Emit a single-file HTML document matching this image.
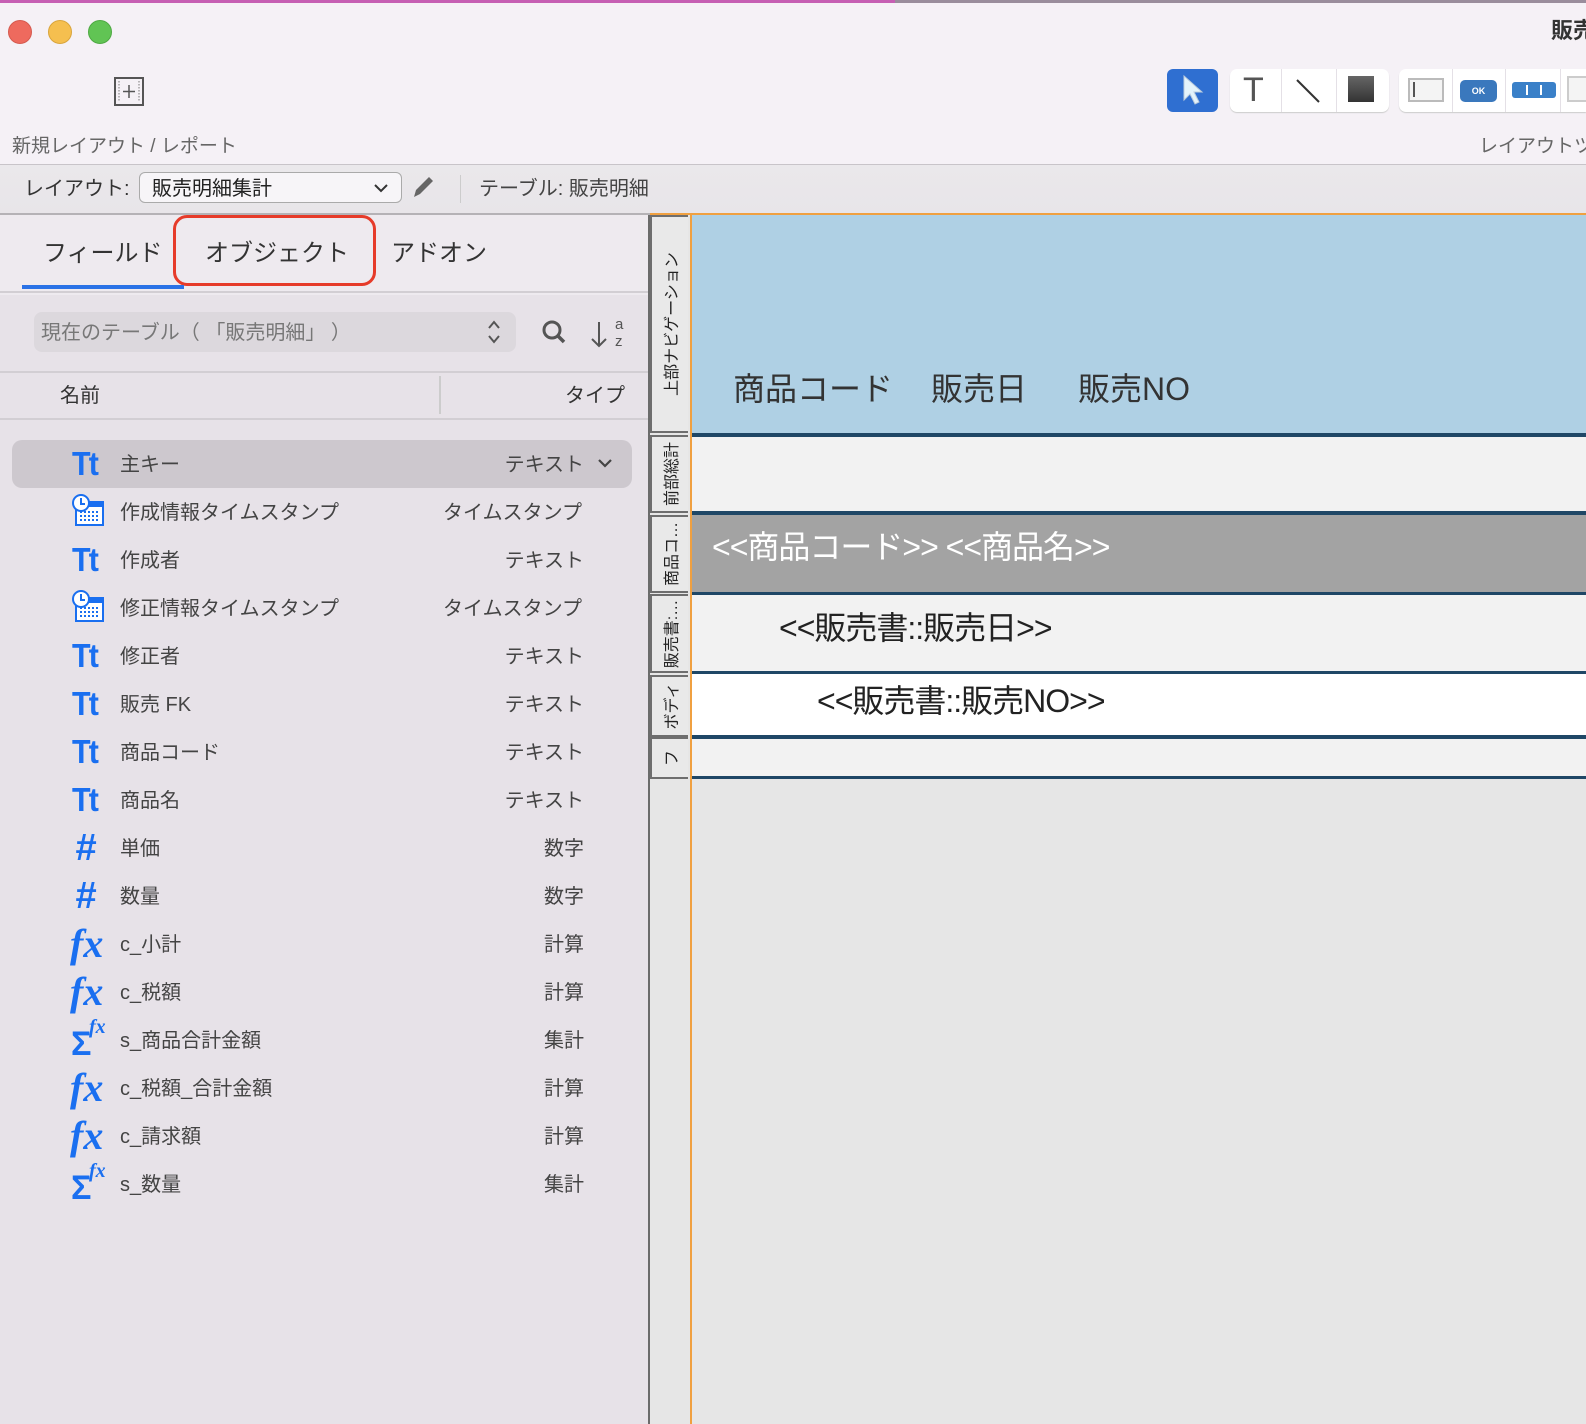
<!DOCTYPE html>
<html><head><meta charset="utf-8">
<style>
*{margin:0;padding:0;box-sizing:border-box}
body{width:1586px;height:1424px;overflow:hidden;position:relative;background:#e6e6e6;font-family:"Liberation Sans","Noto Sans CJK JP",sans-serif;color:#333}
.a{position:absolute}
.t{position:absolute;white-space:nowrap;line-height:1}
.row{position:absolute;left:12px;width:620px;height:48px}
.row .ic{position:absolute;left:60px;top:0;width:40px;height:48px;color:#1a6ff0}
.row .nm{position:absolute;left:108px;top:14px;font-size:20px;color:#444;line-height:22px}
.row .ty{position:absolute;right:48px;top:14px;font-size:20px;color:#444;line-height:22px}
.tt{font:bold 33px "Liberation Sans",sans-serif;position:absolute;top:5px;left:0;letter-spacing:-2px;transform:scaleX(.92);transform-origin:left}
.hs{font:bold italic 38px "Liberation Sans",sans-serif;position:absolute;top:3px;left:3px}
.fx{font:bold italic 40px "Liberation Serif",serif;position:absolute;top:0px;left:-2px;letter-spacing:0px}
.sg{position:absolute;left:-1px;top:9px;font:bold 34px "Liberation Sans",sans-serif}
.sgf{position:absolute;left:17px;top:0px;font:bold italic 20px "Liberation Serif",serif}
.vt{position:absolute;left:650px;width:38px;background:#e9e9e9;border:2px solid #6e6e6e;border-right:none;overflow:hidden}
.vt span{position:absolute;left:50%;top:50%;transform:translate(-50%,-50%) rotate(-90deg);font-size:16px;white-space:nowrap;color:#222}
.band{position:absolute;left:690px;right:0}
.ln{position:absolute;left:690px;right:0;background:#1f4766}
.big{font-size:32px;letter-spacing:-1px}
</style></head><body>
<div class="a" style="left:0;top:0;width:1586px;height:166px;background:#f5f1f6"></div>
<div class="a" style="left:0;top:0;width:895px;height:3px;background:#c65fb3"></div>
<div class="a" style="left:895px;top:0;width:691px;height:3px;background:#9a8d9c"></div>
<div class="a" style="left:8px;top:20px;width:24px;height:24px;border-radius:50%;background:#ee6a5e;border:1px solid #d55a4f"></div>
<div class="a" style="left:48px;top:20px;width:24px;height:24px;border-radius:50%;background:#f5bf4f;border:1px solid #d9a53c"></div>
<div class="a" style="left:88px;top:20px;width:24px;height:24px;border-radius:50%;background:#61c454;border:1px solid #4ea943"></div>
<svg class="a" style="left:114px;top:77px" width="30" height="29" viewBox="0 0 30 29"><rect x="1" y="1" width="28" height="27" fill="none" stroke="#555" stroke-width="2"/><line x1="5" y1="4" x2="5" y2="25" stroke="#777" stroke-dasharray="1.5 1.5"/><line x1="25" y1="4" x2="25" y2="25" stroke="#777" stroke-dasharray="1.5 1.5"/><line x1="15" y1="8" x2="15" y2="21" stroke="#555" stroke-width="1.5"/><line x1="9" y1="14.5" x2="21" y2="14.5" stroke="#555" stroke-width="1.5"/></svg>
<div class="t" style="left:12px;top:137px;font-size:19px;color:#666">新規レイアウト / レポート</div>
<div class="t" style="left:1551px;top:20px;font-size:22px;font-weight:bold;color:#333">販売</div>
<div class="t" style="left:1479px;top:137px;font-size:19px;color:#666">レイアウトツ</div>
<div class="a" style="left:1167px;top:69px;width:51px;height:43px;background:#2f6fd1;border-radius:6px"></div>
<svg class="a" style="left:1180px;top:74px" width="26" height="32" viewBox="0 0 26 32"><path d="M4 2 L4 26 L10 20 L15 30 L19 28 L14 18 L22 18 Z" fill="#e4f3fb" stroke="#bcd" stroke-width="1"/></svg>
<div class="a" style="left:1230px;top:69px;width:159px;height:43px;background:#fff;border-radius:7px;box-shadow:0 1px 1px #ccc"></div>
<div class="a" style="left:1281px;top:69px;width:1px;height:43px;background:#e4e0e6"></div>
<div class="a" style="left:1336px;top:69px;width:1px;height:43px;background:#e4e0e6"></div>
<div class="t" style="left:1243px;top:73px;font-size:34px;color:#555">T</div>
<svg class="a" style="left:1295px;top:78px" width="26" height="26"><line x1="2" y1="2" x2="24" y2="24" stroke="#333" stroke-width="2"/></svg>
<div class="a" style="left:1348px;top:76px;width:26px;height:26px;background:linear-gradient(#666,#333)"></div>
<div class="a" style="left:1399px;top:69px;width:187px;height:43px;background:#fff;border-radius:7px 0 0 7px;box-shadow:0 1px 1px #ccc"></div>
<div class="a" style="left:1452px;top:69px;width:1px;height:43px;background:#e4e0e6"></div>
<div class="a" style="left:1505px;top:69px;width:1px;height:43px;background:#e4e0e6"></div>
<div class="a" style="left:1560px;top:69px;width:1px;height:43px;background:#e4e0e6"></div>
<div class="a" style="left:1408px;top:78px;width:36px;height:24px;border:2px solid #bbb;background:#f4f4f4"></div>
<div class="a" style="left:1413px;top:82px;width:2px;height:15px;background:#555"></div>
<div class="a" style="left:1460px;top:80px;width:37px;height:22px;background:#3a78bd;border-radius:5px;color:#fff;font-size:9px;font-weight:bold;text-align:center;line-height:22px">OK</div>
<div class="a" style="left:1512px;top:82px;width:44px;height:16px;background:#3a80c8;border-radius:3px"></div>
<div class="a" style="left:1526px;top:85px;width:2px;height:10px;background:#fff"></div><div class="a" style="left:1540px;top:85px;width:2px;height:10px;background:#fff"></div>
<div class="a" style="left:1567px;top:76px;width:19px;height:26px;border:2px solid #ccc;border-right:none;background:#f4f4f4"></div>
<div class="a" style="left:0;top:164px;width:1586px;height:1px;background:#c8c4c9"></div>
<div class="a" style="left:0;top:165px;width:1586px;height:48px;background:linear-gradient(#eae8eb,#e8e5e9)"></div>
<div class="t" style="left:24px;top:179px;font-size:20px;color:#333">レイアウト:</div>
<div class="a" style="left:139px;top:172px;width:263px;height:31px;border:1.5px solid #aaa;border-radius:6px;background:#f7f5f8"></div>
<div class="t" style="left:152px;top:179px;font-size:20px;color:#222">販売明細集計</div>
<svg class="a" style="left:373px;top:182px" width="16" height="12"><path d="M2 3 L8 9 L14 3" fill="none" stroke="#333" stroke-width="2"/></svg>
<svg class="a" style="left:410px;top:173px" width="26" height="28"><path d="M4 24 L6 17 L19 4 L23 8 L10 21 Z" fill="#666"/></svg>
<div class="a" style="left:460px;top:175px;width:1px;height:28px;background:#ccc"></div>
<div class="t" style="left:479px;top:179px;font-size:20px;color:#444">テーブル: 販売明細</div>
<div class="a" style="left:0;top:213px;width:1586px;height:2px;background:#b5b2b6"></div>
<div class="a" style="left:0;top:215px;width:648px;height:1209px;background:#e7e2e8"></div>
<div class="a" style="left:0;top:215px;width:648px;height:80px;background:#eeeaef"></div>
<div class="t" style="left:43px;top:242px;font-size:24px;color:#333">フィールド</div>
<div class="t" style="left:205px;top:242px;font-size:24px;color:#333">オブジェクト</div>
<div class="t" style="left:391px;top:242px;font-size:24px;color:#333">アドオン</div>
<div class="a" style="left:173px;top:215px;width:203px;height:71px;border:3px solid #e63b2a;border-radius:14px"></div>
<div class="a" style="left:22px;top:285px;width:162px;height:4px;background:#2a72e6"></div>
<div class="a" style="left:0;top:291px;width:648px;height:2px;background:#d2ced3"></div>
<div class="a" style="left:34px;top:312px;width:482px;height:40px;background:#dcd8dd;border-radius:8px"></div>
<div class="t" style="left:41px;top:323px;font-size:20px;color:#777">現在のテーブル（ 「販売明細」 ）</div>
<svg class="a" style="left:485px;top:318px" width="18" height="28"><path d="M4 10 L9 4 L14 10 M4 18 L9 24 L14 18" fill="none" stroke="#555" stroke-width="2"/></svg>
<svg class="a" style="left:540px;top:318px" width="28" height="28"><circle cx="12" cy="12" r="8" fill="none" stroke="#555" stroke-width="3"/><line x1="18" y1="18" x2="24" y2="24" stroke="#555" stroke-width="3.5"/></svg>
<svg class="a" style="left:589px;top:314px" width="40" height="36"><path d="M10 8 L10 32 M3 25 L10 32 L17 25" fill="none" stroke="#555" stroke-width="2"/><text x="26" y="15" font-size="15" fill="#555" font-family="Liberation Sans">a</text><text x="26" y="32" font-size="15" fill="#555" font-family="Liberation Sans">z</text></svg>
<div class="a" style="left:0;top:371px;width:648px;height:2px;background:#d2ced3"></div>
<div class="t" style="left:60px;top:386px;font-size:20px;color:#333">名前</div>
<div class="a" style="left:439px;top:376px;width:2px;height:38px;background:#ccc"></div>
<div class="t" style="left:565px;top:386px;font-size:20px;color:#333">タイプ</div>
<div class="a" style="left:0;top:418px;width:648px;height:2px;background:#d2ced3"></div>

<div class="row" style="top:440px;background:#cdc8ce;border-radius:10px"><div class="ic"><span class="tt">Tt</span></div><div class="nm">主キー</div><div class="ty">テキスト</div><svg class="a" style="left:585px;top:18px" width="16" height="12"><path d="M2 2 L8 8 L14 2" fill="none" stroke="#444" stroke-width="2.2"/></svg></div>
<div class="row" style="top:488px"><div class="ic"><svg class="a" style="left:-1px;top:6px" width="34" height="34" viewBox="0 0 34 34"><rect x="5" y="8" width="27" height="23" fill="#fff" stroke="#1a6ff0" stroke-width="2"/><rect x="5" y="8" width="27" height="5" fill="#1a6ff0"/><g fill="#1a6ff0"><rect x="9" y="17" width="2" height="2"/><rect x="13" y="17" width="2" height="2"/><rect x="17" y="17" width="2" height="2"/><rect x="21" y="17" width="2" height="2"/><rect x="25" y="17" width="2" height="2"/><rect x="9" y="21" width="2" height="2"/><rect x="13" y="21" width="2" height="2"/><rect x="17" y="21" width="2" height="2"/><rect x="21" y="21" width="2" height="2"/><rect x="25" y="21" width="2" height="2"/><rect x="9" y="25" width="2" height="2"/><rect x="13" y="25" width="2" height="2"/><rect x="17" y="25" width="2" height="2"/><rect x="21" y="25" width="2" height="2"/><rect x="25" y="25" width="2" height="2"/></g><circle cx="10" cy="9" r="8" fill="#fff" stroke="#1a6ff0" stroke-width="2"/><path d="M10 4 L10 10 L14 10" fill="none" stroke="#1a6ff0" stroke-width="2"/></svg></div><div class="nm">作成情報タイムスタンプ</div><div class="ty" style="right:50px">タイムスタンプ</div></div>
<div class="row" style="top:536px"><div class="ic"><span class="tt">Tt</span></div><div class="nm">作成者</div><div class="ty">テキスト</div></div>
<div class="row" style="top:584px"><div class="ic"><svg class="a" style="left:-1px;top:6px" width="34" height="34" viewBox="0 0 34 34"><rect x="5" y="8" width="27" height="23" fill="#fff" stroke="#1a6ff0" stroke-width="2"/><rect x="5" y="8" width="27" height="5" fill="#1a6ff0"/><g fill="#1a6ff0"><rect x="9" y="17" width="2" height="2"/><rect x="13" y="17" width="2" height="2"/><rect x="17" y="17" width="2" height="2"/><rect x="21" y="17" width="2" height="2"/><rect x="25" y="17" width="2" height="2"/><rect x="9" y="21" width="2" height="2"/><rect x="13" y="21" width="2" height="2"/><rect x="17" y="21" width="2" height="2"/><rect x="21" y="21" width="2" height="2"/><rect x="25" y="21" width="2" height="2"/><rect x="9" y="25" width="2" height="2"/><rect x="13" y="25" width="2" height="2"/><rect x="17" y="25" width="2" height="2"/><rect x="21" y="25" width="2" height="2"/><rect x="25" y="25" width="2" height="2"/></g><circle cx="10" cy="9" r="8" fill="#fff" stroke="#1a6ff0" stroke-width="2"/><path d="M10 4 L10 10 L14 10" fill="none" stroke="#1a6ff0" stroke-width="2"/></svg></div><div class="nm">修正情報タイムスタンプ</div><div class="ty" style="right:50px">タイムスタンプ</div></div>
<div class="row" style="top:632px"><div class="ic"><span class="tt">Tt</span></div><div class="nm">修正者</div><div class="ty">テキスト</div></div>
<div class="row" style="top:680px"><div class="ic"><span class="tt">Tt</span></div><div class="nm">販売 FK</div><div class="ty">テキスト</div></div>
<div class="row" style="top:728px"><div class="ic"><span class="tt">Tt</span></div><div class="nm">商品コード</div><div class="ty">テキスト</div></div>
<div class="row" style="top:776px"><div class="ic"><span class="tt">Tt</span></div><div class="nm">商品名</div><div class="ty">テキスト</div></div>
<div class="row" style="top:824px"><div class="ic"><span class="hs">#</span></div><div class="nm">単価</div><div class="ty">数字</div></div>
<div class="row" style="top:872px"><div class="ic"><span class="hs">#</span></div><div class="nm">数量</div><div class="ty">数字</div></div>
<div class="row" style="top:920px"><div class="ic"><span class="fx">fx</span></div><div class="nm">c_小計</div><div class="ty">計算</div></div>
<div class="row" style="top:968px"><div class="ic"><span class="fx">fx</span></div><div class="nm">c_税額</div><div class="ty">計算</div></div>
<div class="row" style="top:1016px"><div class="ic"><span class="sg">Σ</span><span class="sgf">fx</span></div><div class="nm">s_商品合計金額</div><div class="ty">集計</div></div>
<div class="row" style="top:1064px"><div class="ic"><span class="fx">fx</span></div><div class="nm">c_税額_合計金額</div><div class="ty">計算</div></div>
<div class="row" style="top:1112px"><div class="ic"><span class="fx">fx</span></div><div class="nm">c_請求額</div><div class="ty">計算</div></div>
<div class="row" style="top:1160px"><div class="ic"><span class="sg">Σ</span><span class="sgf">fx</span></div><div class="nm">s_数量</div><div class="ty">集計</div></div>

<div class="a" style="left:648px;top:215px;width:2px;height:1209px;background:#6b6b6b"></div>
<div class="band" style="top:215px;height:218px;background:#afd0e4"></div>
<div class="ln" style="top:433px;height:4px"></div>
<div class="band" style="top:437px;height:74px;background:#f2f2f2"></div>
<div class="ln" style="top:511px;height:4px"></div>
<div class="band" style="top:515px;height:77px;background:#a3a3a3"></div>
<div class="ln" style="top:592px;height:3px"></div>
<div class="band" style="top:595px;height:76px;background:#f2f2f2"></div>
<div class="ln" style="top:671px;height:3px"></div>
<div class="band" style="top:674px;height:61px;background:#fff"></div>
<div class="ln" style="top:735px;height:4px"></div>
<div class="band" style="top:739px;height:37px;background:#f2f2f2"></div>
<div class="ln" style="top:776px;height:3px"></div>
<div class="a" style="left:650px;top:213px;width:936px;height:2px;background:#f0a040"></div>
<div class="t" style="left:733px;top:373px;font-size:32px;color:#333">商品コード</div>
<div class="t" style="left:931px;top:373px;font-size:32px;color:#333">販売日</div>
<div class="t" style="left:1078px;top:373px;font-size:32px;color:#333">販売NO</div>
<div class="t big" style="left:712px;top:531px;color:#fff">&lt;&lt;商品コード&gt;&gt; &lt;&lt;商品名&gt;&gt;</div>
<div class="t big" style="left:779px;top:612px;color:#222">&lt;&lt;販売書::販売日&gt;&gt;</div>
<div class="t big" style="left:817px;top:685px;color:#222">&lt;&lt;販売書::販売NO&gt;&gt;</div>
<div class="vt" style="top:215px;height:218px"><span>上部ナビゲーション</span></div>
<div class="vt" style="top:435px;height:78px"><span>前部総計</span></div>
<div class="vt" style="top:515px;height:78px"><span>商品コ…</span></div>
<div class="vt" style="top:594px;height:79px"><span>販売書:…</span></div>
<div class="vt" style="top:675px;height:62px"><span>ボディ</span></div>
<div class="vt" style="top:737px;height:42px"><span>フ</span></div>
<div class="a" style="left:690px;top:215px;width:2px;height:1209px;background:#f0a040"></div>
</body></html>
